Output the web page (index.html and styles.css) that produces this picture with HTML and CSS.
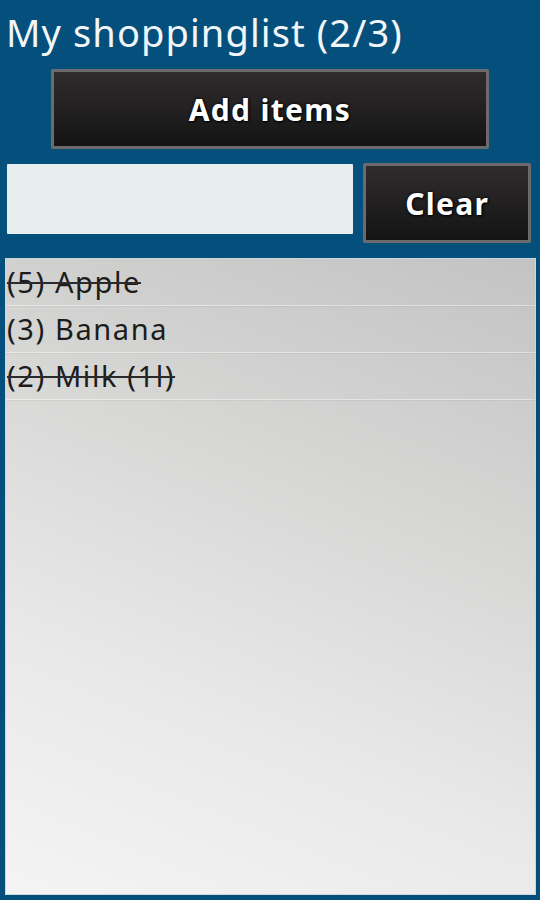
FILE: index.html
```html
<!DOCTYPE html>
<html>
<head>
<meta charset="utf-8">
<link rel="stylesheet" href="styles.css">
</head>
<body>
<div class="app">
  <h1 class="title">My shoppinglist (2/3)</h1>
  <div class="add-row"><button class="btn btn-add">Add items</button></div>
  <div class="filter-row">
    <input class="filter" type="text">
    <button class="btn btn-clear">Clear</button>
  </div>
  <ul class="list">
    <li class="item done">(5) Apple</li>
    <li class="item">(3) Banana</li>
    <li class="item done">(2) Milk (1l)</li>
  </ul>
</div>
</body>
</html>
```
FILE: styles.css
```css
html, body {
  margin: 0;
  padding: 0;
  background: #044f7b;
}
.app {
  width: 540px;
  height: 900px;
  display: flex;
  flex-direction: column;
  font-family: "Noto Sans", "Open Sans", "DejaVu Sans", sans-serif;
}
.title {
  margin: 0;
  height: 69px;
  padding: 4px 0 0 6px;
  box-sizing: border-box;
  font-size: 38px;
  font-weight: normal;
  letter-spacing: 1.1px;
  line-height: 56px;
  color: #f2f6f8;
}
.add-row {
  padding: 0 51px;
}
.btn {
  display: block;
  box-sizing: border-box;
  border: 3px solid #6b6b6b;
  border-radius: 2px;
  background: linear-gradient(to bottom, #2e2c2c 0%, #222020 50%, #141414 100%);
  color: #ffffff;
  font-family: "Noto Sans", "Open Sans", "DejaVu Sans", sans-serif;
  font-weight: bold;
  font-size: 30px;
  letter-spacing: 1.3px;
  text-shadow: 0 0 3px #000, 1px 1px 2px #000;
  padding: 0;
}
.btn-add {
  width: 100%;
  height: 80px;
}
.filter-row {
  display: flex;
  align-items: flex-start;
  gap: 10px;
  padding: 14px 9px 0 7px;
}
.filter {
  width: 347px;
  height: 70px;
  margin-top: 1px;
  box-sizing: border-box;
  border: none;
  background: #e8eeee;
  border-radius: 1px;
  padding: 0 8px;
}
.btn-clear {
  width: 168px;
  height: 80px;
}
.list {
  list-style: none;
  margin: 15px 4px 5px 5px;
  padding: 0;
  flex: 1;
  border: 1px solid #cfd6da;
  background: linear-gradient(202deg, #c3c3c3 0%, #d6d6d5 35%, #e8e9e8 70%, #f3f4f3 100%);
}
.item {
  height: 47px;
  box-sizing: border-box;
  padding: 0 0 0 1px;
  font-size: 29px;
  letter-spacing: 1.6px;
  line-height: 46px;
  color: #1c1c1c;
  border-bottom: 1px solid rgba(255, 255, 255, 0.45);
  box-shadow: 0 1px 0 rgba(0, 0, 0, 0.04);
}
.item.done {
  text-decoration: line-through;
  text-decoration-color: #2a2a2a;
  text-decoration-thickness: 2px;
}
```
